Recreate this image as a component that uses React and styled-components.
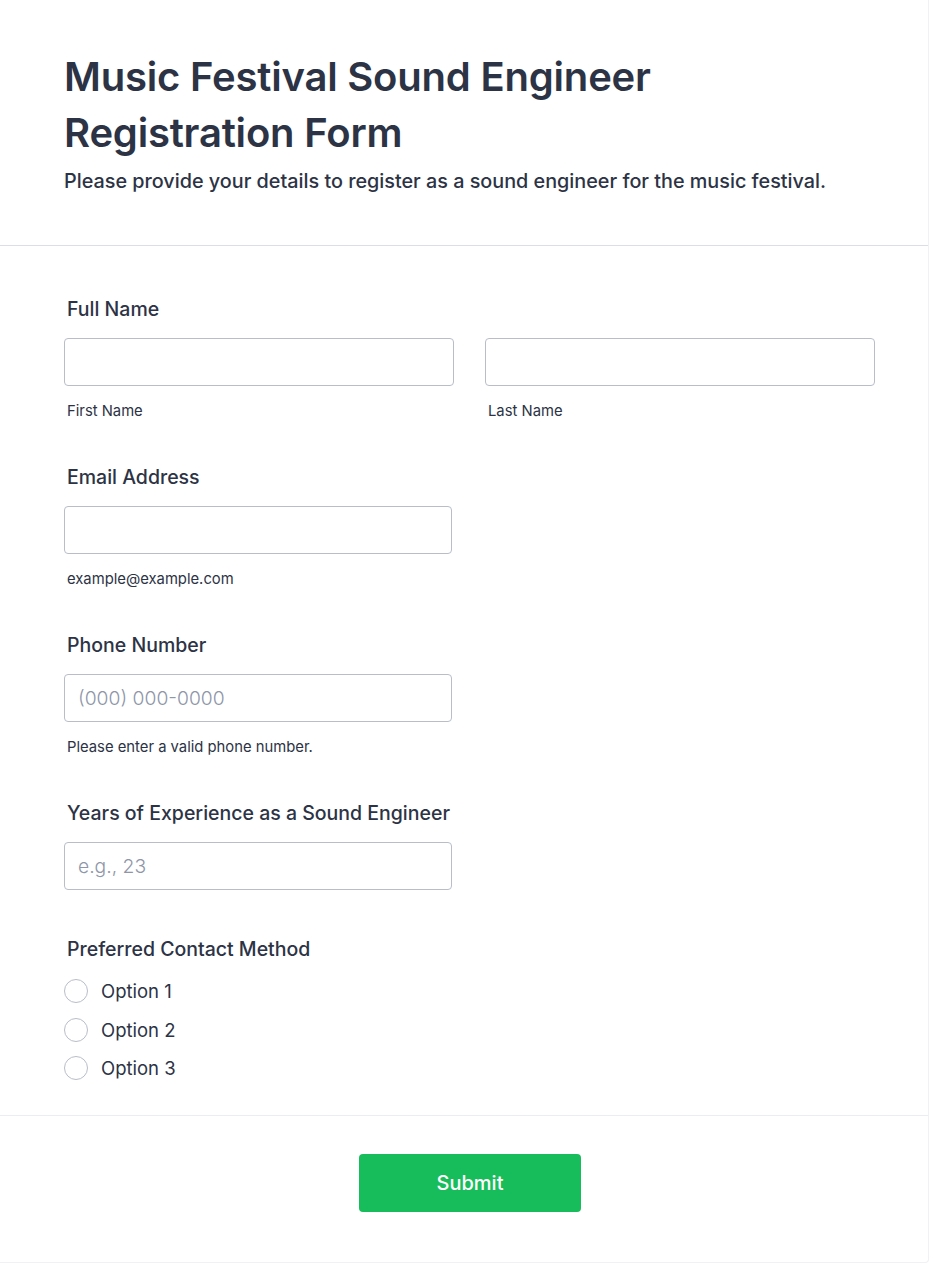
import React from 'react';
import styled, { createGlobalStyle } from 'styled-components';

const GlobalStyle = createGlobalStyle`
  body {
    margin: 0;
    background: #fff;
    font-family: Inter, 'Noto Sans', sans-serif;
    color: #2c3345;
  }
  * {
    box-sizing: border-box;
  }
`;

const Card = styled.div`
  width: 929px;
  min-height: 1262px;
  background: #fff;
  border-right: 1px solid #f0f0f5;
  border-bottom: 1px solid #f0f0f5;
  border-radius: 0 0 4px 0;
`;

const Header = styled.header`
  padding: 49px 54px 50px 64px;
  border-bottom: 1px solid #dcdde6;
`;

const Title = styled.h1`
  margin: 0;
  font-size: 40px;
  line-height: 56px;
  font-weight: 600;
  letter-spacing: -0.2px;
`;

const Subtitle = styled.p`
  margin: 7px 0 0;
  font-size: 19.8px;
  line-height: 27px;
  font-weight: 500;
`;

const Body = styled.div`
  padding: 50px 54px 27px 64px;
  border-bottom: 1px solid #ececf3;
`;

const Field = styled.div`
  margin-bottom: ${(p) => p.$gap || 42}px;
`;

const Label = styled.div`
  font-size: 19.5px;
  line-height: 27px;
  font-weight: 500;
  padding-left: 3px;
  margin-bottom: ${(p) => p.$gap ?? 15}px;
`;

const Row = styled.div`
  display: grid;
  grid-template-columns: 390px 390px;
  column-gap: 31px;
`;

const Input = styled.input`
  display: block;
  width: ${(p) => p.$width || 388}px;
  height: 48px;
  border: 1px solid #b8bdc9;
  border-radius: 4px;
  padding: 0 13px;
  font-family: Inter, 'Noto Sans', sans-serif;
  font-size: 19.3px;
  font-weight: 300;
  color: #2c3345;
  background: #fff;
  outline: none;

  &::placeholder {
    color: #8e96a8;
  }
`;

const Sublabel = styled.div`
  margin-top: 15px;
  padding-left: 3px;
  font-size: 14.8px;
  line-height: 21px;
`;

const Options = styled.div`
  display: flex;
  flex-direction: column;
  margin-top: 9px;
`;

const Option = styled.label`
  display: flex;
  align-items: center;
  gap: 13px;
  height: 38.5px;
  font-size: 18.5px;
  cursor: pointer;
`;

const Radio = styled.span`
  width: 24px;
  height: 24px;
  border-radius: 50%;
  border: 1px solid #b8bdc9;
  background: #fff;
  flex-shrink: 0;
`;

const Footer = styled.footer`
  display: flex;
  justify-content: center;
  padding: 38px 0 50px;
`;

const SubmitButton = styled.button`
  width: 222px;
  height: 58px;
  margin-left: 12px;
  border: none;
  border-radius: 4px;
  background: #18bd5b;
  color: #fff;
  font-family: Inter, 'Noto Sans', sans-serif;
  font-size: 20px;
  font-weight: 500;
  cursor: pointer;
`;

const App = () => (
  <>
    <GlobalStyle />
    <Card>
      <Header>
        <Title>
          Music Festival Sound Engineer
          <br />
          Registration Form
        </Title>
        <Subtitle>
          Please provide your details to register as a sound engineer for the music festival.
        </Subtitle>
      </Header>

      <Body>
        <Field>
          <Label>Full Name</Label>
          <Row>
            <div>
              <Input $width={390} />
              <Sublabel>First Name</Sublabel>
            </div>
            <div>
              <Input $width={390} />
              <Sublabel>Last Name</Sublabel>
            </div>
          </Row>
        </Field>

        <Field>
          <Label>Email Address</Label>
          <Input type="email" />
          <Sublabel>example@example.com</Sublabel>
        </Field>

        <Field>
          <Label>Phone Number</Label>
          <Input placeholder="(000) 000-0000" />
          <Sublabel>Please enter a valid phone number.</Sublabel>
        </Field>

        <Field $gap={46}>
          <Label>Years of Experience as a Sound Engineer</Label>
          <Input placeholder="e.g., 23" />
        </Field>

        <div>
          <Label $gap={0}>Preferred Contact Method</Label>
          <Options>
            {['Option 1', 'Option 2', 'Option 3'].map((o) => (
              <Option key={o}>
                <Radio />
                {o}
              </Option>
            ))}
          </Options>
        </div>
      </Body>

      <Footer>
        <SubmitButton>Submit</SubmitButton>
      </Footer>
    </Card>
  </>
);

export default App;
